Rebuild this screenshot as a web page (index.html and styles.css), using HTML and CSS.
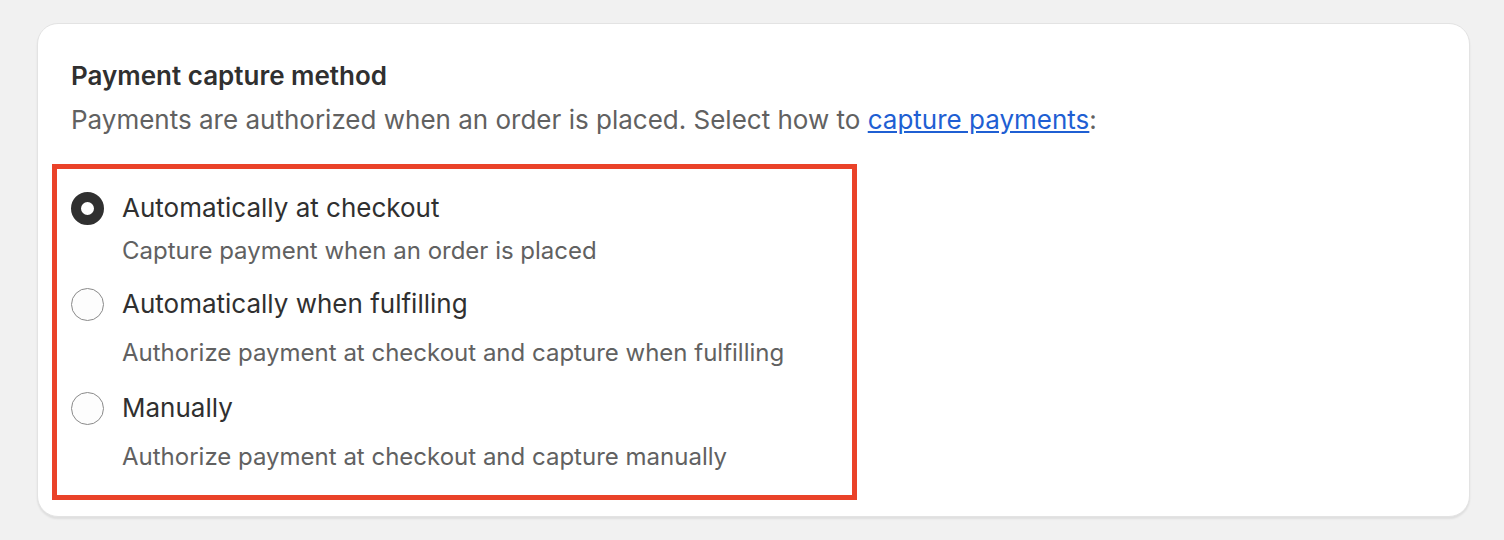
FILE: index.html
```html
<!DOCTYPE html>
<html lang="en">
<head>
    <meta charset="UTF-8">
    <meta name="viewport" content="width=device-width, initial-scale=1.0">
    <title>Payment capture method</title>
    <link rel="stylesheet" href="styles.css">
</head>
<body>
    <div class="card">
        <h2 class="card-title">Payment capture method</h2>
        <p class="card-text">Payments are authorized when an order is placed. Select how to <a href="#">capture payments</a>:</p>

        <div class="choices">
            <label class="choice first">
                <span class="choice-row">
                    <input type="radio" name="capture" value="checkout" checked>
                    <span class="choice-label">Automatically at checkout</span>
                </span>
                <span class="choice-help">Capture payment when an order is placed</span>
            </label>

            <label class="choice">
                <span class="choice-row">
                    <input type="radio" name="capture" value="fulfilling">
                    <span class="choice-label">Automatically when fulfilling</span>
                </span>
                <span class="choice-help">Authorize payment at checkout and capture when fulfilling</span>
            </label>

            <label class="choice">
                <span class="choice-row">
                    <input type="radio" name="capture" value="manual">
                    <span class="choice-label">Manually</span>
                </span>
                <span class="choice-help">Authorize payment at checkout and capture manually</span>
            </label>
        </div>
    </div>
</body>
</html>
```

FILE: styles.css
```css
body {
    font-family: Inter, "Noto Sans", sans-serif;
    margin: 0;
    padding: 23px 34px 24px 37px;
    background-color: #f1f1f1;
    color: #303030;
}
.card {
    background: white;
    border: 1px solid #e3e3e3;
    border-radius: 21px;
    box-shadow: 0 2px 2px rgba(0,0,0,0.08);
    padding: 35px 33px 16px;
}
.card-title {
    margin: 0;
    font-size: 26px;
    font-weight: 600;
    line-height: 34px;
}
.card-text {
    margin: 10px 0 0;
    font-size: 26px;
    line-height: 34px;
    color: #616161;
}
.card-text a {
    color: #1f5fd3;
}
.choices {
    width: 781px;
    margin: 27px 0 0 -19px;
    padding: 22px 0 22px 14px;
    border: 5px solid #ea4229;
}
.choice {
    display: flex;
    flex-direction: column;
    cursor: pointer;
}
.choice + .choice {
    margin-top: 20px;
}
.choice:last-child {
    margin-top: 22px;
}
.choice-row {
    display: flex;
    align-items: center;
    gap: 18px;
}
.choice-row input {
    appearance: none;
    margin: 0;
    width: 33px;
    height: 33px;
    border: 1px solid #8a8a8a;
    border-radius: 50%;
    background: #fdfdfd;
    flex-shrink: 0;
}
.choice-row input:checked {
    border: 10px solid #303030;
    background: white;
}
.choice-label {
    font-size: 26px;
    line-height: 34px;
}
.choice-help {
    margin: 16px 0 0 51px;
    font-size: 24px;
    line-height: 32px;
    color: #616161;
}
.first .choice-help {
    margin-top: 10px;
}
```
